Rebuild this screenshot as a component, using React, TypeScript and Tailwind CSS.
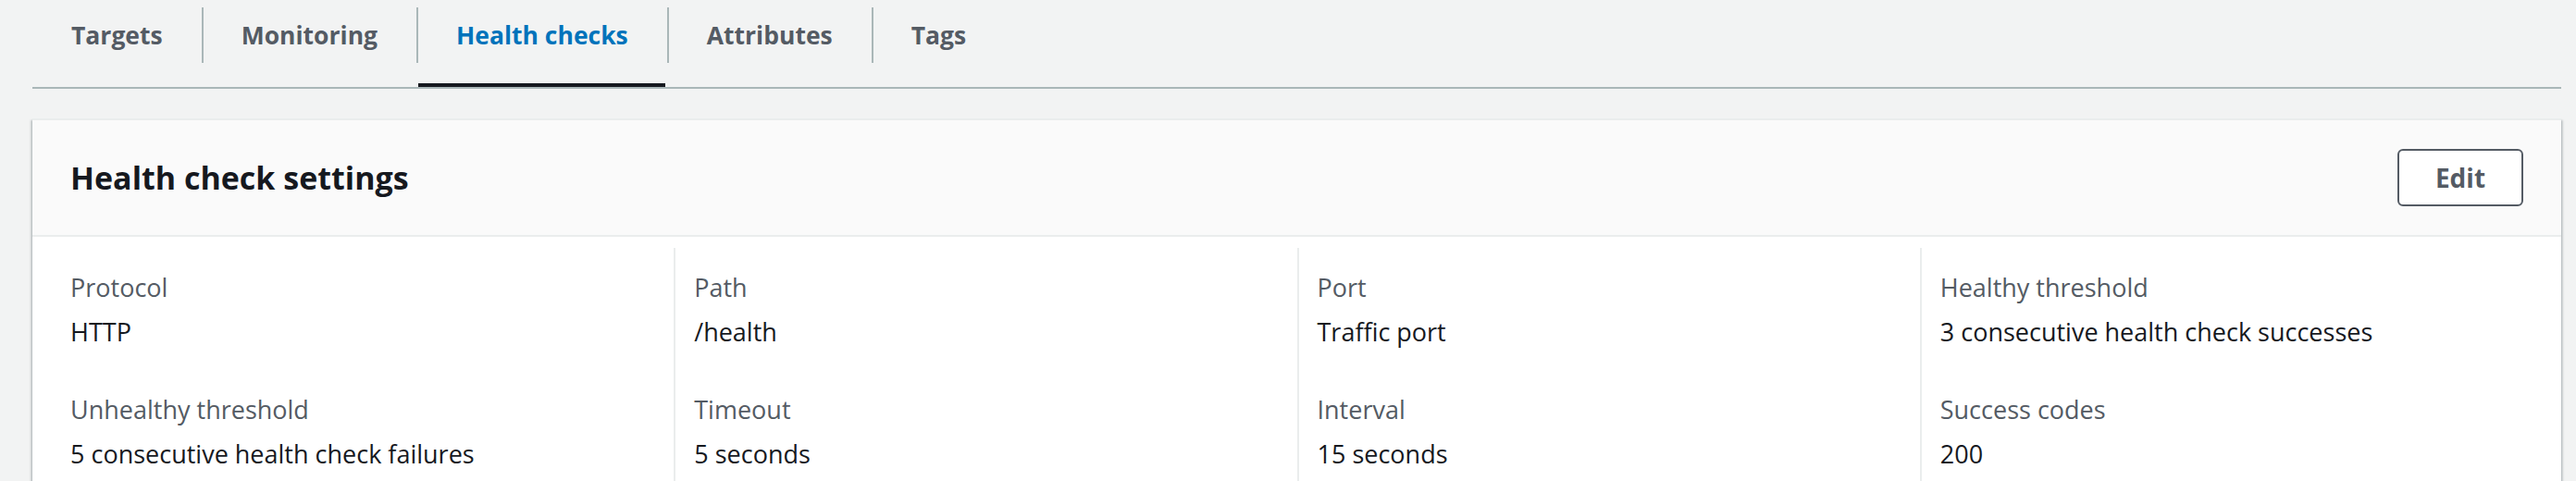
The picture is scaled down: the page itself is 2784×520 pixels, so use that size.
import React from "react";

const tabs = ["Targets", "Monitoring", "Health checks", "Attributes", "Tags"];
const activeTab = "Health checks";

const columns = [
    [
        { label: "Protocol", value: "HTTP" },
        { label: "Unhealthy threshold", value: "5 consecutive health check failures" },
    ],
    [
        { label: "Path", value: "/health" },
        { label: "Timeout", value: "5 seconds" },
    ],
    [
        { label: "Port", value: "Traffic port" },
        { label: "Interval", value: "15 seconds" },
    ],
    [
        { label: "Healthy threshold", value: "3 consecutive health check successes" },
        { label: "Success codes", value: "200" },
    ],
];

const App: React.FC = () => {
    return (
        <div className="min-h-[520px] w-full bg-[#f2f3f3] pl-[35px] pr-[16px] font-['Open_Sans',sans-serif]">
            <div className="flex border-b-2 border-[#aab7b8]">
                {tabs.map((tab, i) => {
                    const active = tab === activeTab;
                    return (
                        <div key={tab} className="flex flex-col pt-[8px]">
                            <div
                                className={`flex h-[60px] items-center pr-[42px] text-[26.5px] font-bold leading-none ${
                                    i === 0 ? "pl-[42px]" : "border-l-2 border-[#aab7b8] pl-[41px]"
                                } ${active ? "text-[#0073bb]" : "text-[#545b64]"}`}
                            >
                                {tab}
                            </div>
                            <div className="h-[22px]" />
                            <div className={`mx-[2px] h-[4px] ${active ? "bg-[#16191f]" : "bg-transparent"}`} />
                        </div>
                    );
                })}
            </div>

            <div className="mt-[32px] bg-white shadow-[0_2px_2px_0_rgba(0,28,36,0.3),2px_2px_2px_0_rgba(0,28,36,0.15),-2px_2px_2px_0_rgba(0,28,36,0.15)]">
                <div className="flex h-[128px] items-center justify-between border-y-2 border-[#eaeded] bg-[#fafafa] px-[41px]">
                    <h2 className="text-[34px] font-bold leading-none text-[#16191f]">Health check settings</h2>
                    <button className="flex h-[62px] w-[136px] items-center justify-center rounded-[6px] border-2 border-[#545b64] bg-white text-[28px] font-bold text-[#545b64]">
                        Edit
                    </button>
                </div>
                <div className="grid grid-cols-4 px-[20px] pt-[12px]">
                    {columns.map((col, i) => (
                        <div
                            key={i}
                            className={`pt-[21px] ${i === 0 ? "pl-[21px]" : "border-l-2 border-[#eaeded] pl-[20px]"}`}
                        >
                            {col.map((item) => (
                                <div key={item.label} className="mb-[40px]">
                                    <div className="mb-[4px] text-[27px] leading-[44px] text-[#545b64]">{item.label}</div>
                                    <div className="text-[27px] leading-[44px] text-[#16191f]">{item.value}</div>
                                </div>
                            ))}
                        </div>
                    ))}
                </div>
            </div>
        </div>
    );
};

export default App;
